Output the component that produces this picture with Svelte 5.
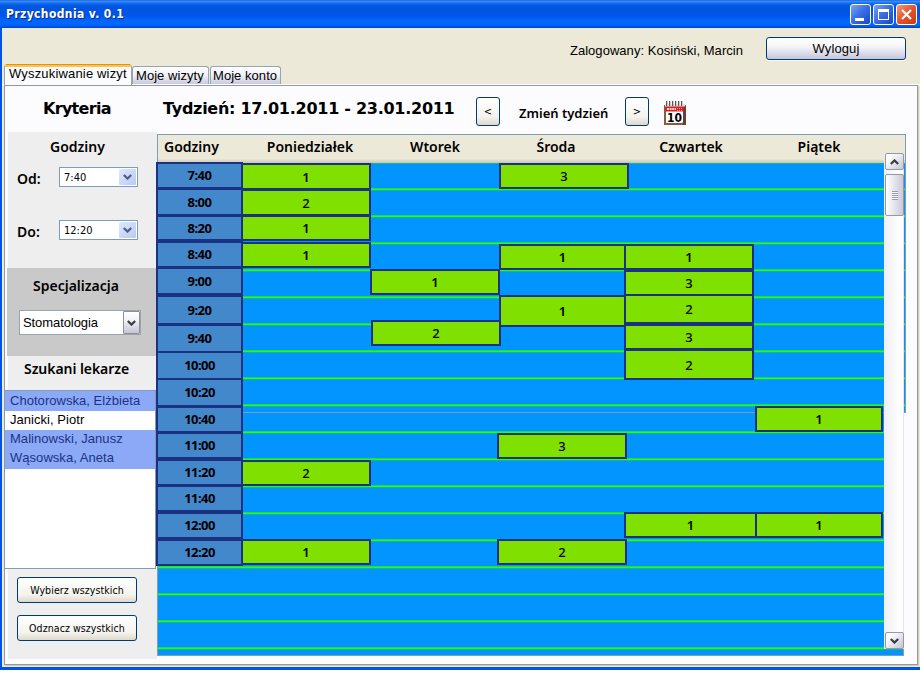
<script>
  const times = [
    ['7:40', 23, 3], ['8:00', 24, 3], ['8:20', 22, 4], ['8:40', 23, 3], ['9:00', 24, 4],
    ['9:20', 26, 3], ['9:40', 25, 2], ['10:00', 25, 2], ['10:20', 25, 3], ['10:40', 23, 3],
    ['11:00', 23, 4], ['11:20', 23, 3], ['11:40', 23, 4], ['12:00', 23, 4], ['12:20', 23, 2]
  ];
  const days = ['Godziny', 'Poniedziałek', 'Wtorek', 'Środa', 'Czwartek', 'Piątek'];
  // visit blocks on the schedule canvas: x, y, width, height, doctors available
  const visits = [
    [84, 0, 130, 27, 1], [84, 26, 130, 27, 2], [84, 52, 130, 26, 1], [84, 79, 130, 26, 1],
    [84, 297, 130, 26, 2], [84, 376, 130, 26, 1],
    [213, 106, 130, 26, 1], [214, 157, 130, 26, 2],
    [342, 0, 130, 26, 3], [342, 81, 127, 26, 1], [342, 132, 127, 32, 1],
    [340, 270, 130, 26, 3], [340, 376, 130, 26, 2],
    [467, 81, 130, 26, 1], [467, 107, 130, 26, 3], [467, 131, 130, 30, 2],
    [467, 161, 130, 26, 3], [467, 186, 130, 31, 2], [467, 349, 133, 26, 1],
    [598, 243, 128, 26, 1], [598, 349, 128, 26, 1]
  ];
  const doctors = [
    ['Chotorowska, Elżbieta', true], ['Janicki, Piotr', false],
    ['Malinowski, Janusz', true], ['Wąsowska, Aneta', true]
  ];
</script>

{#snippet chevron(up, color)}
  <svg class="chev" width="9" height="6" viewBox="0 0 9 6">
    <path d={up ? 'M0.8 5 L4.5 1.4 L8.2 5' : 'M0.8 1 L4.5 4.6 L8.2 1'} fill="none" stroke={color} stroke-width="2.2" />
  </svg>
{/snippet}

<div class="window">
  <header class="titlebar">
    <span class="title">Przychodnia v. 0.1</span>
    <div class="winbtns">
      <span class="wb"><svg width="19" height="19"><rect x="4" y="13" width="9" height="3" fill="#fff" /></svg></span>
      <span class="wb"><svg width="19" height="19"><path d="M4 4h11v11H4z M5 7v7h9V7z" fill="#fff" fill-rule="evenodd" /></svg></span>
      <span class="wb close"><svg width="19" height="19"><path d="M5 5l9 9M14 5l-9 9" stroke="#fff" stroke-width="2.2" /></svg></span>
    </div>
  </header>

  <div class="body">
    <div class="userbar">
      <span class="user">Zalogowany: Kosiński, Marcin</span>
      <button class="logout">Wyloguj</button>
    </div>
    <nav class="tabs">
      <div class="tab active"><span>Wyszukiwanie wizyt</span></div>
      <div class="tab second"><span>Moje wizyty</span></div>
      <div class="tab third"><span>Moje konto</span></div>
    </nav>

    <main class="panel">
      <aside>
        <h1>Kryteria</h1>
        <section class="hours">
          <h2 class="hh">Godziny</h2>
          <div class="field"><b>Od:</b><div class="select"><span>7:40</span><i>{@render chevron(false, '#4d6185')}</i></div></div>
          <div class="field"><b>Do:</b><div class="select"><span>12:20</span><i>{@render chevron(false, '#4d6185')}</i></div></div>
        </section>
        <section class="spec">
          <h2 class="sh">Specjalizacja</h2>
          <div class="select wide"><span>Stomatologia</span><i>{@render chevron(false, '#3c3c44')}</i></div>
        </section>
        <section class="found"><h2 class="fh">Szukani lekarze</h2></section>
        <ul>
          {#each doctors as [name, selected]}
            <li class:selected>{name}</li>
          {/each}
        </ul>
        <section class="actions">
          <button>Wybierz wszystkich</button>
          <button>Odznacz wszystkich</button>
        </section>
      </aside>

      <div class="main">
        <div class="week">
          <span class="range">Tydzień: 17.01.2011 - 23.01.2011</span>
          <button class="nav">&lt;</button>
          <span class="change">Zmień tydzień</span>
          <button class="nav">&gt;</button>
          <svg class="cal" width="24" height="26" viewBox="0 0 24 26">
            <path d="M1 5h22v20H1z" fill="#8a5a42" />
            <path d="M20 6h3v19h-3z" fill="#6b4030" />
            <path d="M3 5h17v17l-1 1H3z" fill="#fff" />
            <path d="M2.5 6h18v5.500h-18z" fill="#dc1c1f" />
            <path d="M2 4h20v2.500H2z" fill="#e9dfda" />
            <path d="M3.500 1v5M6.500 1v5M9.500 1v5M12.500 1v5M15.500 1v5M18.500 1v5" stroke="#5c5754" />
            <path d="M4.500 1v5M7.500 1v5M10.500 1v5M13.500 1v5M16.500 1v5M19.500 1v5" stroke="#cfcbc8" />
            <path d="M4 9h9" stroke="#fbdede" stroke-width="2" stroke-dasharray="2 .6" />
            <path d="M14 8.500h6M14 10.500h6" stroke="#f7aaaa" stroke-dasharray="1 1" />
            <text x="11.500" y="21.500" text-anchor="middle" textLength="15" lengthAdjust="spacingAndGlyphs">10</text>
          </svg>
        </div>

        <div class="schedule">
          <div class="days">
            {#each days as d}<span>{d}</span>{/each}
          </div>
          <div class="canvas">
            <div class="lines"></div>
            <div class="edge"><div class="lines"></div></div>
            <div class="rule"></div>
            <div class="times">
              {#each times as [t, h, gap]}
                <div class="time" style="height:{h}px;margin-bottom:{gap}px">{t}</div>
              {/each}
            </div>
            {#each visits as [x, y, w, h, n]}
              <div class="visit" class:one={n === 1} style="left:{x}px;top:{y}px;width:{w}px;height:{h}px">{n}</div>
            {/each}
          </div>
          <div class="scroll">
            <span class="arrow">{@render chevron(true, '#3c3c44')}</span>
            <span class="thumb"><em></em></span>
            <span class="arrow down">{@render chevron(false, '#3c3c44')}</span>
          </div>
        </div>
      </div>
    </main>
  </div>
</div>

<style>
  :global(body) { background: #fff; overflow: hidden; }
  * { box-sizing: border-box; }
  h1, h2, ul { margin: 0; padding: 0; font-weight: normal; }
  .window {
    width: 920px; height: 670px; display: flex; flex-direction: column;
    background: #0054e3; font: 13px/16px "Liberation Sans", Arial, sans-serif; color: #000; white-space: nowrap;
  }
  .titlebar {
    height: 28px; flex: none; display: flex; justify-content: space-between; padding: 4px 3px 0 6px;
    background: linear-gradient(#1058d0 0, #3c91ff 1px, #2a82f8 2px, #0a63ea 4px, #0055e0 7px, #0055e4 15px, #0064fa 20px, #0068ff 24px, #005cf0 26px, #0040c0 28px);
  }
  .title { color: #fff; font: bold 12px/20px "DejaVu Sans Condensed", "DejaVu Sans", sans-serif; letter-spacing: .38px; text-shadow: 1px 1px #0a2a90; }
  .winbtns { display: flex; gap: 2px; }
  .wb { width: 21px; height: 21px; border: 1px solid #fff; border-radius: 3px; background: linear-gradient(135deg, #7fa4f5, #3d6fe6 45%, #1346d0); }
  .wb svg { display: block; }
  .wb.close { background: linear-gradient(135deg, #f09a80, #e2532c 50%, #cf3a0c); }
  .body { flex: none; height: 639px; margin-left: 2px; background: #ece9d8; display: flex; flex-direction: column; }
  .userbar { height: 36px; display: flex; justify-content: flex-end; padding: 9px 14px 0 0; }
  .user { margin: 6px 23px 0 0; letter-spacing: .04px; }
  button {
    display: block; padding: 0; border: 1px solid #003c74; border-radius: 3px; color: #000;
    background: linear-gradient(#fff, #f4f3ee 70%, #ddd8cc); font: 11px/20px "DejaVu Sans Condensed", sans-serif; text-align: center;
  }
  .logout { width: 140px; height: 23px; background: linear-gradient(#fff, #f6f6fa 40%, #c6c5da); font: 13px/21px "Liberation Sans", sans-serif; letter-spacing: .12px; box-shadow: 0 1px #f8f7f0; }
  .tabs { height: 21px; display: flex; align-items: flex-end; padding-left: 2px; border-bottom: 1px solid #fff; }
  .tab { height: 18px; border: 1px solid #91a7b4; border-bottom: 0; border-radius: 3px 3px 0 0; background: linear-gradient(#fff, #f0f0f7 50%, #c9c9df); line-height: 18px; padding-left: 3px; }
  .second { width: 77px; margin-right: 1px; }
  .third { width: 71px; padding-left: 2px; }
  .tab.active { width: 128px; height: 21px; margin-bottom: -1px; padding-left: 4px; border-top: 3px solid #ffc73c; background: #fcfcfe; line-height: 14px; position: relative; }
  .tab.active::before { content: ""; position: absolute; left: 1px; right: 1px; top: -3px; height: 1px; background: #e68b2c; }
  .tab span { letter-spacing: .05px; }
  .tab.active span { letter-spacing: .17px; }
  .panel { width: 914px; height: 580px; margin-left: 2px; flex: none; border: 1px solid #919b9c; background: #fcfcfe; display: flex; box-shadow: 1px 1px #d0cebf; }
  aside { width: 152px; flex: none; }
  aside section { margin-left: 3px; background: #eee; overflow: hidden; }
  h1 { height: 46px; padding: 13px 0 0 38px; font: bold 16px/20px "DejaVu Sans", sans-serif; letter-spacing: -.7px; }
  h2, .field b, .days, .change { font: 600 14px/18px "Noto Sans", sans-serif; }
  .hours { height: 136px; }
  .hh { padding: 6px 0 0 42px; }
  .field { display: flex; margin: 11px 0 0 9px; }
  .field b { width: 42px; margin-top: 3px; }
  .field + .field { margin-top: 32px; }
  .select { width: 79px; height: 20px; border: 1px solid #7f9db9; background: #fff; display: flex; justify-content: space-between; padding: 1px; font: 11px/18px "DejaVu Sans Condensed", sans-serif; }
  .select span { padding-left: 3px; }
  .select i { width: 17px; height: 16px; border-radius: 1px; background: linear-gradient(135deg, #dfe8ff, #b7caf5); display: flex; align-items: center; justify-content: center; }
  aside .spec { height: 88px; background: #c9c9c9; margin-left: 2px; }
  .sh { padding: 9px 0 0 26px; }
  .wide { width: 122px; height: 25px; margin: 15px 0 0 12px; border-color: #9ba5b0; font: 13px/24px "Liberation Sans", sans-serif; padding: 0; letter-spacing: -.08px; }
  .wide i { height: 23px; border: 1px solid #8e8f9b; background: linear-gradient(#fff, #f2f2f8 40%, #c5c5d6); }
  .found { height: 34px; }
  .fh { padding: 4px 0 0 16px; letter-spacing: -.06px; }
  ul { width: 152px; height: 179px; margin-left: -1px; border: 1px solid #7f9db9; background: #fff; list-style: none; }
  li { height: 19px; padding-left: 5px; line-height: 17px; letter-spacing: .04px; }
  li.selected { background: #8ba9f7; color: #1b3384; }
  li:first-child { height: 20px; line-height: 19px; }
  li:last-child { height: 20px; }
  .actions { height: 90px; width: 149px; padding: 8px 0 0 9px; }
  .actions button { width: 120px; height: 26px; line-height: 24px; font-size: 10.500px; letter-spacing: .08px; }
  .actions button + button { margin-top: 12px; }
  .main { display: flex; flex-direction: column; }
  .week { height: 48px; display: flex; align-items: flex-start; padding-left: 6px; }
  .range { width: 313px; margin-top: 12px; font: bold 16px/21px "DejaVu Sans", sans-serif; letter-spacing: -.27px; }
  .nav { width: 24px; height: 29px; margin-top: 11px; }
  .change { width: 125px; margin-top: 18px; padding-left: 19px; font-size: 13px; }
  .cal { margin: 14px 0 0 14px; }
  .cal text { font: bold 13px "DejaVu Sans", sans-serif; }
  .schedule { position: relative; width: 749px; height: 522px; border-top: 1px solid #7f9db9; }
  .days { height: 28px; padding-top: 3px; display: grid; grid-template-columns: 67px 170px 80px 162px 108px 148px; text-align: center; background: linear-gradient(#ece9d8 85%, #c9c5b2); border: solid #7f9db9; border-width: 0 1px; }
  .canvas { position: relative; height: 493px; width: 747px; background: #0294ff; border: solid #7f9db9; border-width: 0 1px 1px 0; box-shadow: inset 1px 0 #7f9db9; }
  .lines { position: absolute; inset: 0 0 5px 1px; background: repeating-linear-gradient(#12b496 0 1px, #0294ff 1px 25px, #1cd85c 25px 26px, #24ff0c 26px 27px); }
  .edge { position: absolute; left: 744px; top: 0; width: 5px; height: 250px; background: #0294ff; border: solid #7f9db9; border-width: 0 1px 1px 0; }
  .edge .lines { inset: 0; }
  .rule { position: absolute; left: 86px; top: 249px; width: 658px; height: 1px; background: #7f9db9; }
  .times { position: relative; width: 87px; height: 404px; margin-left: -1px; padding: 2px; top: -1px; background: #1b3282; }
  .time { background: #4488cc; font: bold 13px/23px "Noto Sans", sans-serif; letter-spacing: -.55px; display: flex; align-items: center; justify-content: center; }
  .visit { position: absolute; display: flex; align-items: center; justify-content: center; border: 2px solid #1b3282; background: #80e000; font: 500 13px/16px "Noto Sans", sans-serif; }
  .one { font-weight: 600; }
  .scroll { position: absolute; left: 727px; top: 18px; width: 20px; height: 496px; background: linear-gradient(90deg, #eeeef6, #fdfdfe 70%); border-right: 1px solid #e4e4ea; display: flex; flex-direction: column; padding-left: 1px; }
  .arrow, .thumb { width: 19px; height: 17px; flex: none; border: 1px solid #9697a3; border-radius: 2px; background: linear-gradient(135deg, #fff 20%, #c4c4d6); display: flex; align-items: center; justify-content: center; }
  .thumb { height: 42px; margin-top: 4px; background: linear-gradient(90deg, #fff, #c9c9da); }
  .thumb em { width: 6px; height: 9px; background: repeating-linear-gradient(#9a9bab 0 1px, #f5f5fa 1px 2px); }
  .down { margin-top: auto; }
</style>
